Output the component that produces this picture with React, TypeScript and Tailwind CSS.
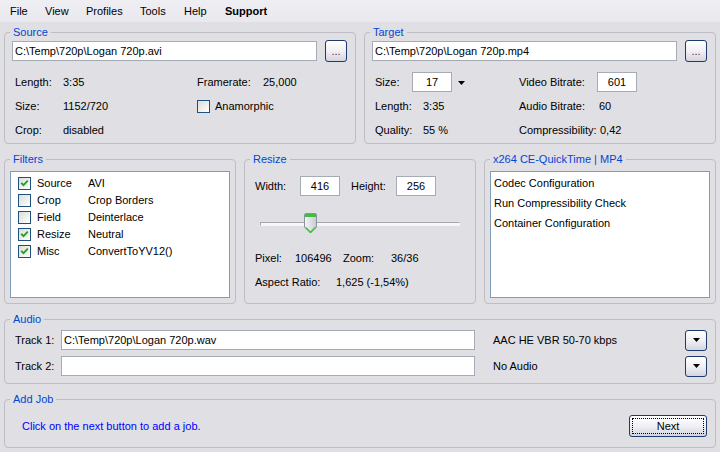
import React from 'react';

// XP-style encoder front end

const font = "font-['Liberation_Sans',Arial,sans-serif]";

function GroupBox({ title, className, children }: { title: string; className?: string; children: React.ReactNode }) {
  return (
    <fieldset className={`min-w-0 rounded-[4px] border border-[#bdbdc4] px-0 ${className ?? ''}`}>
      <legend className="ml-[5px] px-[3px] leading-[13px] text-[#0046d5]">{title}</legend>
      {children}
    </fieldset>
  );
}

function Check({ checked }: { checked?: boolean }) {
  return (
    <span className="relative block h-[13px] w-[13px] shrink-0 border border-[#1c5180] bg-gradient-to-br from-[#dcdcd7] to-white">
      {checked && (
        <svg className="absolute left-[1px] top-[1px]" width="9" height="9" viewBox="0 0 9 9">
          <path d="M1.2 3.8 L3.5 6.2 L7.8 1.6" stroke="#21a121" strokeWidth="1.8" fill="none" />
        </svg>
      )}
    </span>
  );
}

function XpButton({ className, children }: { className?: string; children?: React.ReactNode }) {
  return (
    <button className={`flex items-center justify-center rounded-[3px] border border-[#1c3a6b] bg-gradient-to-b from-white via-[#f0f0f5] to-[#d4d4e0] ${className ?? ''}`}>
      {children}
    </button>
  );
}

function Arrow() {
  return (
    <svg width="7" height="4" viewBox="0 0 7 4">
      <path d="M0 0 H7 L3.5 4 Z" fill="#000" />
    </svg>
  );
}

function TextBox({ value, className }: { value: string; className?: string }) {
  return (
    <div className={`flex h-[20px] items-center border border-[#a5acb5] bg-white px-[2px] ${className ?? ''}`}>{value}</div>
  );
}

const filters = [
  { name: 'Source', value: 'AVI', on: true },
  { name: 'Crop', value: 'Crop Borders', on: false },
  { name: 'Field', value: 'Deinterlace', on: false },
  { name: 'Resize', value: 'Neutral', on: true },
  { name: 'Misc', value: 'ConvertToYV12()', on: true },
];

const menu = [
  { label: 'File', w: 'w-[35px]' },
  { label: 'View', w: 'w-[41px]' },
  { label: 'Profiles', w: 'w-[54px]' },
  { label: 'Tools', w: 'w-[44px]' },
  { label: 'Help', w: 'w-[41px]' },
];

export default function App() {
  return (
    <div className={`h-[452px] w-[720px] overflow-hidden bg-[#e0dfe3] text-[11px] text-black ${font}`}>
      {/* Menu */}
      <div className="flex h-[22px] items-center bg-gradient-to-b from-[#eeeef3] to-[#e8e8ee] pl-[10px]">
        {menu.map((m) => (
          <span key={m.label} className={m.w}>{m.label}</span>
        ))}
        <span className="font-bold">Support</span>
      </div>

      <div className="flex flex-col gap-[9px] px-[4px] pt-[4px]">
        {/* Source / Target */}
        <div className="grid grid-cols-2 gap-[8px]">
          <GroupBox title="Source">
            <div className="pl-[7px] pr-[8px] pb-[1px]">
              <div className="mt-[1px] flex h-[22px] items-center gap-[8px]">
                <TextBox value="C:\Temp\720p\Logan 720p.avi" className="flex-1" />
                <XpButton className="h-[22px] w-[22px] text-[#6b1f3a]">...</XpButton>
              </div>
              <div className="mt-[8px] pl-[3px]">
                <div className="flex h-[24px] items-center">
                  <span className="w-[48px]">Length:</span>
                  <span className="w-[134px]">3:35</span>
                  <span className="w-[66px]">Framerate:</span>
                  <span>25,000</span>
                </div>
                <div className="flex h-[24px] items-center">
                  <span className="w-[48px]">Size:</span>
                  <span className="w-[134px]">1152/720</span>
                  <Check />
                  <span className="ml-[5px]">Anamorphic</span>
                </div>
                <div className="flex h-[24px] items-center">
                  <span className="w-[48px]">Crop:</span>
                  <span>disabled</span>
                </div>
              </div>
            </div>
          </GroupBox>

          <GroupBox title="Target">
            <div className="pl-[7px] pr-[8px] pb-[1px]">
              <div className="mt-[1px] flex h-[22px] items-center gap-[8px]">
                <TextBox value="C:\Temp\720p\Logan 720p.mp4" className="flex-1" />
                <XpButton className="h-[22px] w-[22px] text-[#6b1f3a]">...</XpButton>
              </div>
              <div className="mt-[8px] pl-[3px]">
                <div className="flex h-[24px] items-center">
                  <span className="w-[37px]">Size:</span>
                  <TextBox value="17" className="w-[40px] justify-center" />
                  <span className="ml-[6px] mt-[1px] w-[61px]"><Arrow /></span>
                  <span className="w-[78px]">Video Bitrate:</span>
                  <TextBox value="601" className="w-[40px] justify-center" />
                </div>
                <div className="flex h-[24px] items-center">
                  <span className="w-[48px]">Length:</span>
                  <span className="w-[96px]">3:35</span>
                  <span className="w-[80px]">Audio Bitrate:</span>
                  <span>60</span>
                </div>
                <div className="flex h-[24px] items-center">
                  <span className="w-[48px]">Quality:</span>
                  <span className="w-[96px]">55 %</span>
                  <span className="w-[81px]">Compressibility:</span>
                  <span>0,42</span>
                </div>
              </div>
            </div>
          </GroupBox>
        </div>

        {/* Filters / Resize / Codec */}
        <div className="grid grid-cols-3 gap-[8px]">
          <GroupBox title="Filters">
            <div className="px-[5px] pb-[5px] pt-[5px]">
              <div className="h-[127px] border border-[#7f9db9] bg-white pl-[7px] pt-[3px]">
                {filters.map((f) => (
                  <div key={f.name} className="flex h-[17px] items-center">
                    <Check checked={f.on} />
                    <span className="ml-[6px] w-[51px]">{f.name}</span>
                    <span>{f.value}</span>
                  </div>
                ))}
              </div>
            </div>
          </GroupBox>

          <GroupBox title="Resize">
            <div className="px-[10px] pt-[10px]">
              <div className="flex h-[20px] items-center">
                <span className="w-[45px]">Width:</span>
                <TextBox value="416" className="w-[40px] justify-center" />
                <span className="ml-[11px] w-[45px]">Height:</span>
                <TextBox value="256" className="w-[40px] justify-center" />
              </div>
              <div className="relative mt-[14px] h-[26px]">
                <div className="absolute left-[5px] top-[12px] h-[4px] w-[200px] rounded-[1px] border border-[#a8a8b0] border-b-[#f4f4f4] border-r-[#f4f4f4] bg-[#f7f7f7]" />
                <svg className="absolute left-[49px] top-[3px]" width="13" height="21" viewBox="0 0 13 21">
                  <defs>
                    <linearGradient id="th" x1="0" x2="1" y1="0" y2="0">
                      <stop offset="0" stopColor="#f6f6f8" />
                      <stop offset="1" stopColor="#c9c9d2" />
                    </linearGradient>
                  </defs>
                  <path d="M0.5 2 Q0.5 0.5 2 0.5 H11 Q12.5 0.5 12.5 2 V14 L6.5 20 L0.5 14 Z" fill="url(#th)" stroke="#8a94a0" />
                  <rect x="1" y="1" width="11" height="3" fill="#3fbf3f" />
                  <path d="M1.5 14.3 L6.5 19.3 L11.5 14.3" stroke="#3fbf3f" strokeWidth="1.3" fill="none" />
                </svg>
              </div>
              <div className="mt-[10px] flex h-[24px] items-center">
                <span className="w-[40px]">Pixel:</span>
                <span className="w-[48px]">106496</span>
                <span className="w-[48px]">Zoom:</span>
                <span>36/36</span>
              </div>
              <div className="flex h-[24px] items-center">
                <span className="w-[81px]">Aspect Ratio:</span>
                <span>1,625 (-1,54%)</span>
              </div>
            </div>
          </GroupBox>

          <GroupBox title="x264 CE-QuickTime | MP4">
            <div className="px-[5px] pb-[5px] pt-[5px]">
              <div className="h-[127px] border border-[#7f9db9] bg-white pl-[3px] pt-[1px]">
                <div className="flex h-[20px] items-center">Codec Configuration</div>
                <div className="flex h-[20px] items-center">Run Compressibility Check</div>
                <div className="flex h-[20px] items-center">Container Configuration</div>
              </div>
            </div>
          </GroupBox>
        </div>

        {/* Audio */}
        <GroupBox title="Audio">
          <div className="flex flex-col gap-[4px] pl-[10px] pr-[8px] pt-[3px] pb-[6px]">
            {[
              { label: 'Track 1:', path: 'C:\\Temp\\720p\\Logan 720p.wav', codec: 'AAC HE VBR 50-70 kbps' },
              { label: 'Track 2:', path: '', codec: 'No Audio' },
            ].map((t) => (
              <div key={t.label} className="flex h-[22px] items-center">
                <span className="w-[46px]">{t.label}</span>
                <TextBox value={t.path} className="h-[19px] w-[414px]" />
                <span className="ml-[18px] flex-1">{t.codec}</span>
                <XpButton className="h-[21px] w-[22px]"><Arrow /></XpButton>
              </div>
            ))}
          </div>
        </GroupBox>

        {/* Add Job */}
        <GroupBox title="Add Job">
          <div className="flex items-center justify-between pl-[17px] pr-[8px] pt-[9px] pb-[10px]">
            <span className="text-[#0000ff]">Click on the next button to add a job.</span>
            <XpButton className="h-[22px] w-[78px] p-[2px]">
              <span className="flex h-full w-full items-center justify-center border border-dotted border-black">Next</span>
            </XpButton>
          </div>
        </GroupBox>
      </div>
    </div>
  );
}
